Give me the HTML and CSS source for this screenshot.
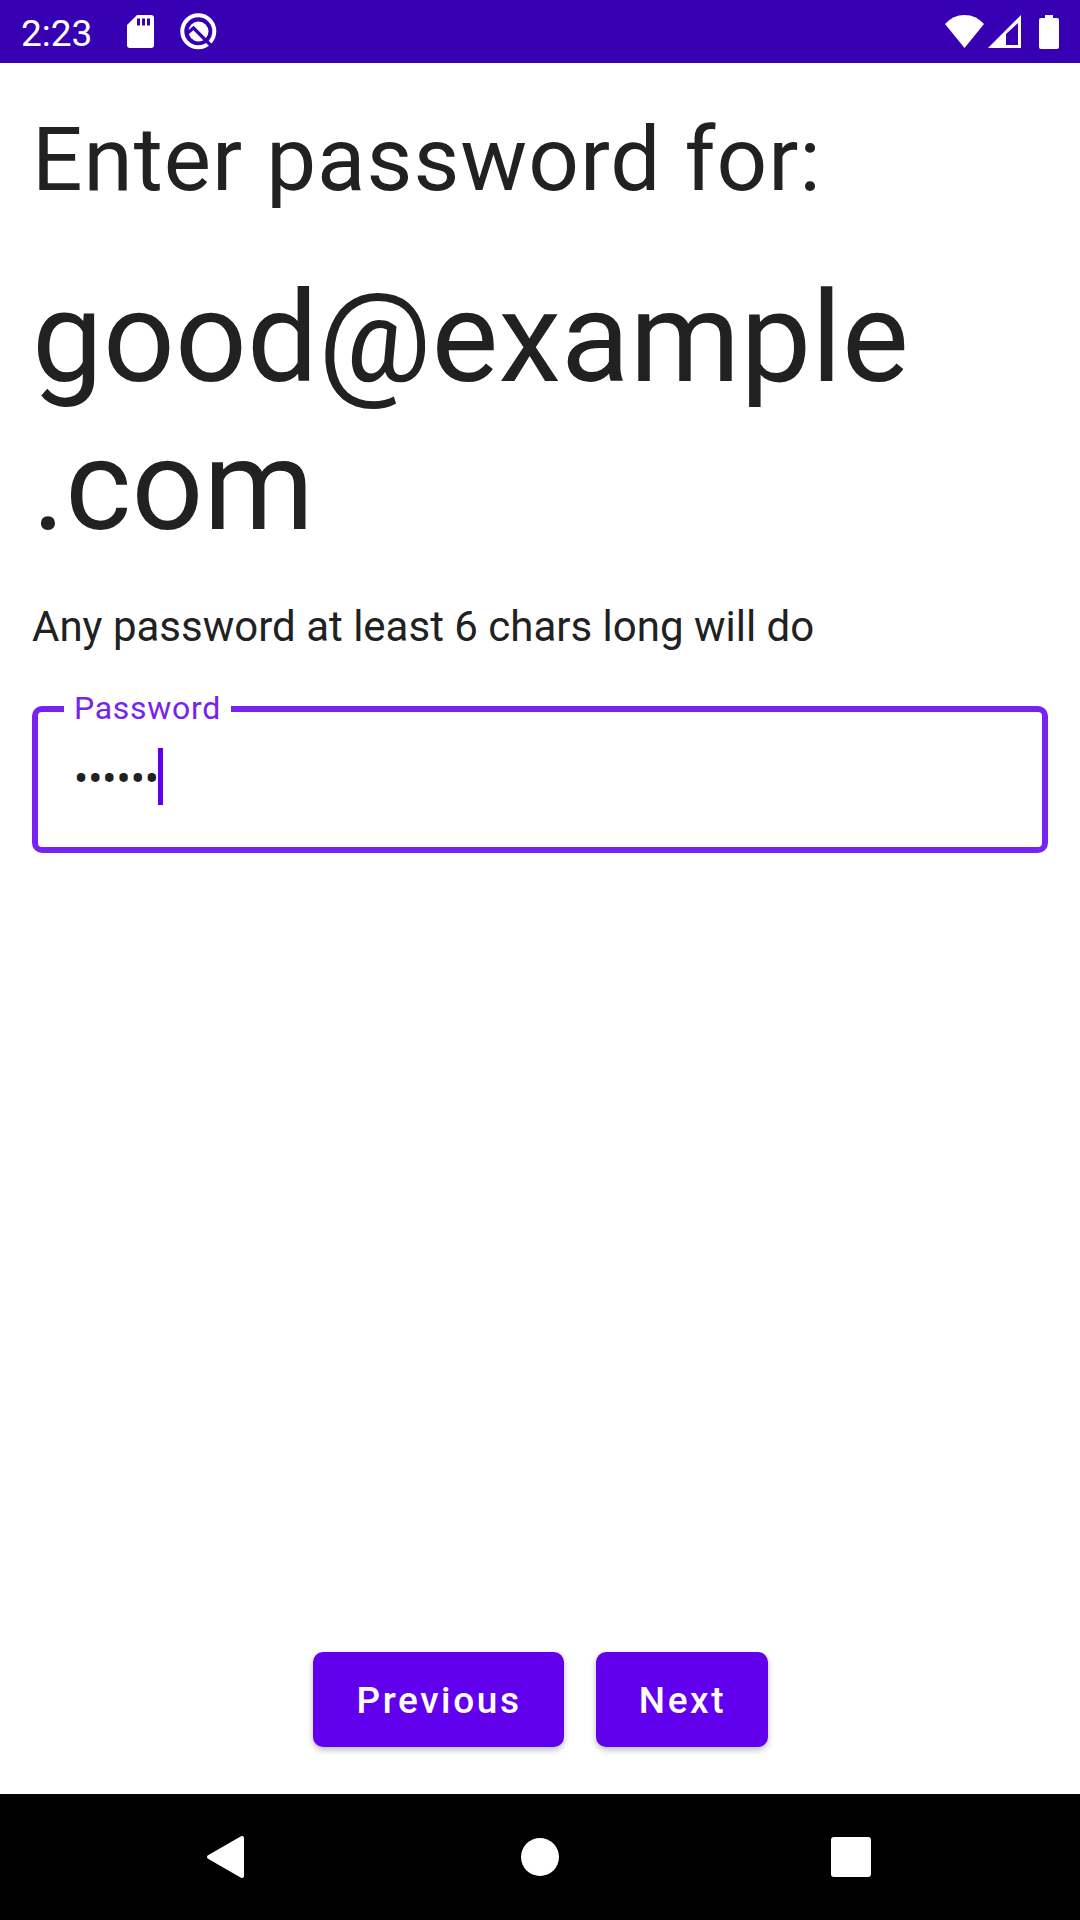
FILE: index.html
```html
<!DOCTYPE html>
<html lang="en">
<head>
<meta charset="utf-8">
<title>Enter password</title>
<link rel="stylesheet" href="styles.css">
</head>
<body>
<header class="status">
  <span class="clock">2:23</span>
  <svg class="sd" width="27" height="33" viewBox="0 0 27 33"><path fill="#fff" fill-rule="evenodd" d="M10 0H24Q27 0 27 3V30Q27 33 24 33H3Q0 33 0 30V10ZM10 3.500V10.500H13V3.500ZM15 3.500V10.500H18V3.500ZM20 3.500V10.500H23V3.500Z"/></svg>
  <svg class="ring" width="37" height="37" viewBox="0 0 37 37"><circle cx="18.300" cy="18.300" r="16" fill="none" stroke="#fff" stroke-width="4"/><circle cx="18.500" cy="18.500" r="10" fill="#fff"/><path fill="none" stroke="#3700b3" stroke-width="3.200" d="M7 20.500L13.500 15L31.500 33"/></svg>
  <div class="signals">
    <svg width="39" height="33" viewBox="0 0 39 33"><path fill="#fff" d="M0 9Q8 0 19.500 0T39 9L19.500 33Z"/></svg>
    <svg width="33" height="33" viewBox="0 0 33 33"><path fill="#fff" fill-rule="evenodd" d="M33 0V33H0ZM30 8V30H18V19Z"/></svg>
    <svg class="battery" width="20" height="34" viewBox="0 0 20 34"><path fill="#fff" d="M6 0H14V3H18Q20 3 20 5V32Q20 34 18 34H2Q0 34 0 32V5Q0 3 2 3H6Z"/></svg>
  </div>
</header>
<main class="content">
  <h1 class="title">Enter password for:</h1>
  <p class="email">good@example<br>.com</p>
  <p class="hint">Any password at least 6 chars long will do</p>
  <div class="field"><span class="label">Password</span><span class="dots">••••••</span><span class="caret"></span></div>
  <div class="actions"><button class="button previous">Previous</button><button class="button next">Next</button></div>
</main>
<nav class="navbar">
  <svg width="720" height="60" viewBox="180 0 720 60" fill="#fff"><path d="M242 11V49L209 30Z" stroke="#fff" stroke-width="4" stroke-linejoin="round"/><circle cx="540" cy="30" r="19"/><rect x="831" y="10" width="40" height="40" rx="3"/></svg>
</nav>
</body>
</html>
```
FILE: styles.css
```css
* { box-sizing: border-box; }
body { margin: 0; width: 1080px; height: 1920px; display: flex; flex-direction: column; background: #fff; color: #212121; font-family: Roboto, sans-serif; }
.status { height: 63px; background: #3700b3; color: #fff; display: flex; align-items: center; padding: 0 21px; }
.clock { font-size: 37px; width: 105.5px; line-height: 63px; padding-top: 3px; }
.ring { margin-left: 26px; }
.signals { margin-left: auto; display: flex; align-items: center; gap: 4px; }
.battery { margin-left: 14.5px; }
.content { flex: 1; display: flex; flex-direction: column; padding: 0 32px 47px; }
.title { margin: 44px 0 0; font-size: 89px; line-height: 105px; font-weight: 400; letter-spacing: 0.98px; }
.email { margin: 52px 0 0; font-size: 126px; line-height: 148px; letter-spacing: 0.15px; }
.hint { margin: 42px 0 0; font-size: 42px; line-height: 49px; }
.field { position: relative; height: 147px; margin-top: 55px; border: 6px solid #7722ee; border-radius: 10px; display: flex; align-items: flex-start; padding: 36px 36px 0; }
.label { position: absolute; left: 26px; top: -22px; padding: 0 10px; background: #fff; color: #7722ee; font-size: 32px; line-height: 36px; letter-spacing: 0.7px; }
.dots { width: 84px; font-size: 42px; line-height: 57px; padding-top: 2px; }
.caret { width: 5px; height: 57px; background: #6200ee; }
.actions { margin-top: auto; display: flex; justify-content: center; gap: 32px; }
.button { height: 95px; border: 0; border-radius: 10px; background: #6200ee; color: #fff; font: 500 37px/92px Roboto, sans-serif; letter-spacing: 2.6px; padding: 3px 0 0 2px; box-shadow: 0 3px 6px #0004; }
.previous { width: 251px; }
.next { width: 172px; }
.navbar { height: 126px; background: #000; display: flex; align-items: center; justify-content: center; }
```
